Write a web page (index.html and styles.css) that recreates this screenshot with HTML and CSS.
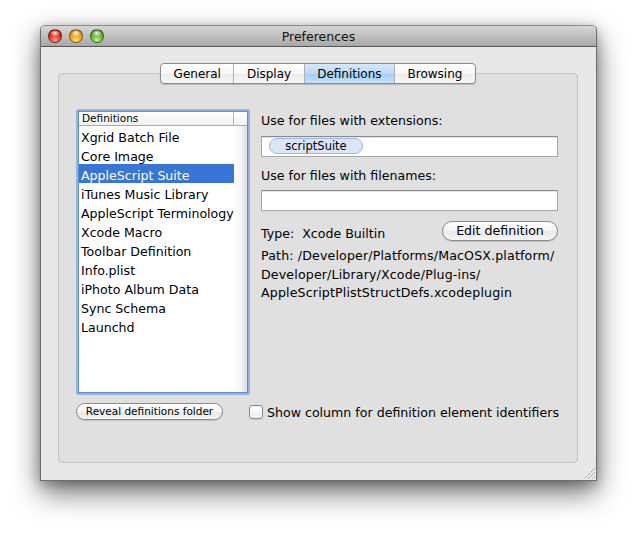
FILE: index.html
```html
<!DOCTYPE html>
<html>
<head>
<meta charset="utf-8">
<title>Preferences</title>
<link rel="stylesheet" href="styles.css">
</head>
<body>
<div class="window">
  <div class="titlebar">
    <div class="lights">
      <span class="light red"></span>
      <span class="light yellow"></span>
      <span class="light green"></span>
    </div>
    <div class="title">Preferences</div>
    <div></div>
  </div>
  <div class="content">
    <div class="tabbox">
      <div class="tabs">
        <span class="tab">General</span>
        <span class="tab">Display</span>
        <span class="tab active">Definitions</span>
        <span class="tab">Browsing</span>
      </div>
      <div class="pane">
        <div class="list">
          <div class="list-inner">
            <div class="list-head">
              <div class="head-cell">Definitions</div>
              <div class="head-filler"></div>
            </div>
            <div class="list-body">
              <div class="rows">
                <div class="row">Xgrid Batch File</div>
                <div class="row">Core Image</div>
                <div class="row selected">AppleScript Suite</div>
                <div class="row">iTunes Music Library</div>
                <div class="row">AppleScript Terminology</div>
                <div class="row">Xcode Macro</div>
                <div class="row">Toolbar Definition</div>
                <div class="row">Info.plist</div>
                <div class="row">iPhoto Album Data</div>
                <div class="row">Sync Schema</div>
                <div class="row">Launchd</div>
              </div>
              <div class="filler"></div>
            </div>
          </div>
        </div>
        <div class="details">
          <div class="label first">Use for files with extensions:</div>
          <div class="field field-ext"><span class="token">scriptSuite</span></div>
          <div class="label second">Use for files with filenames:</div>
          <div class="field field-names"></div>
          <div class="type-row">
            <div class="type"><span class="type-key">Type:</span>Xcode Builtin</div>
            <div class="push-btn">Edit definition</div>
          </div>
          <div class="path">Path: /Developer/Platforms/MacOSX.platform/<br>Developer/Library/Xcode/Plug-ins/<br>AppleScriptPlistStructDefs.xcodeplugin</div>
        </div>
      </div>
      <div class="bottom">
        <div class="small-btn">Reveal definitions folder</div>
        <label class="check"><span class="box"></span><span class="check-text">Show column for definition element identifiers</span></label>
      </div>
    </div>
  </div>
  <svg class="grip" width="11" height="11" viewBox="0 0 11 11"><path d="M10.5 0.5 L0.5 10.5 M10.5 4.5 L4.5 10.5 M10.5 8.5 L8.5 10.5" stroke="#7a7a7a" stroke-width="1" stroke-dasharray="1 1" fill="none"/></svg>
</div>
</body>
</html>
```

FILE: styles.css
```css
* { box-sizing: border-box; }
html, body { margin: 0; padding: 0; background: #fff; }
body {
  min-height: 535px;
  padding-top: 25px;
  font-family: "DejaVu Sans", "Liberation Sans", sans-serif;
  font-size: 12.6px;
  color: #000;
}
.window {
  position: relative;
  margin: 0 0 0 40px;
  width: 557px;
  height: 456px;
  display: flex;
  flex-direction: column;
  background: #e8e8e8;
  border: 1px solid #6e6e6e;
  border-top-color: #8c8c8c;
  border-radius: 5px 5px 0 0;
  box-shadow: 0 12px 28px rgba(0,0,0,0.55), 0 3px 12px rgba(0,0,0,0.25);
}
.titlebar {
  height: 21px;
  display: grid;
  grid-template-columns: 1fr auto 1fr;
  align-items: center;
  background: linear-gradient(#d6d6d6, #a8a8a8);
  border-bottom: 1px solid #565656;
  border-radius: 4px 4px 0 0;
}
.lights { display: flex; gap: 7px; padding-left: 7px; }
.light {
  width: 14px; height: 14px; border-radius: 50%;
  border: 1px solid rgba(0,0,0,0.4);
}
.red {
  background: radial-gradient(ellipse 55% 35% at 50% 26%, rgba(255,255,255,0.9), rgba(255,255,255,0) 80%),
              radial-gradient(circle at 50% 85%, #ff9a8c, #e0291d 55%, #8c0a05);
}
.yellow {
  background: radial-gradient(ellipse 55% 35% at 50% 26%, rgba(255,255,255,0.9), rgba(255,255,255,0) 80%),
              radial-gradient(circle at 50% 85%, #ffe07a, #f09a10 55%, #9c5a00);
}
.green {
  background: radial-gradient(ellipse 55% 35% at 50% 26%, rgba(255,255,255,0.9), rgba(255,255,255,0) 80%),
              radial-gradient(circle at 50% 85%, #c4f08e, #5cae2c 55%, #2c6a0e);
}
.title { font-size: 12.5px; color: #111; padding-top: 1px; }
.content {
  flex: 1;
  display: flex;
  flex-direction: column;
  padding: 26px 18px 17px 17px;
}
.tabbox {
  flex: 1;
  display: flex;
  flex-direction: column;
  background: #e0e0e0;
  border: 1px solid #c2c2c2;
  border-radius: 4px;
}
.tabs {
  align-self: center;
  margin-top: -11px;
  display: flex;
  height: 21px;
  font-size: 12px;
  border: 1px solid #8a8a8a;
  border-radius: 4px;
  overflow: hidden;
  background: linear-gradient(#ffffff, #f6f6f6 50%, #ececec 52%, #f7f7f7);
  box-shadow: 0 1px 1px rgba(0,0,0,0.18);
}
.tab {
  padding: 1px 12.5px 0;
  line-height: 19px;
  border-left: 1px solid #b0b0b0;
}
.tab:first-child { border-left: none; }
.tab.active {
  background: linear-gradient(#d6e9fc, #bcdaf8 50%, #a5cdf5 52%, #c4e2fc);
}
.pane {
  display: grid;
  grid-template-columns: 174px 1fr;
  column-gap: 11px;
  padding: 25px 19px 0 17px;
}
.list {
  height: 286px;
  border: 2px solid #92b4e4;
  border-radius: 2px;
}
.list-inner {
  height: 100%;
  border: 1px solid #5f8dd0;
  background: #fff;
  display: flex;
  flex-direction: column;
}
.list-head {
  display: flex;
  height: 14px;
  border-bottom: 1px solid #a8a8a8;
  background: linear-gradient(#ffffff, #f1f1f1);
  font-size: 10.5px;
  line-height: 13px;
}
.head-cell {
  width: 155px;
  padding-left: 3px;
  border-right: 1px solid #b3b3b3;
}
.head-filler { flex: 1; }
.list-body { flex: 1; display: flex; }
.rows { width: 155px; }
.row {
  height: 19px;
  line-height: 19px;
  padding: 2px 0 0 2px;
  white-space: nowrap;
}
.row.selected { background: #3875d7; color: #fff; }
.filler {
  flex: 1;
  background: linear-gradient(to right, #ffffff, #f6f6f6 50%, #dcdcdc);
}
.details { display: flex; flex-direction: column; }
.label { line-height: 19px; padding-top: 1px; }
.label.first { margin-top: 1px; }
.label.second { margin-top: 8px; }
.field {
  height: 21px;
  background: #fff;
  border: 1px solid #a5a5a5;
  border-top-color: #8a8a8a;
  box-shadow: inset 0 1px 0 #e4e4e4;
}
.field-ext { margin-top: 6px; padding: 1px 0 0 7px; }
.field-names { margin-top: 5px; }
.token {
  display: inline-block;
  width: 94px;
  height: 16px;
  line-height: 15px;
  text-align: center;
  font-size: 11.5px;
  background: #dce5f6;
  border: 1px solid #9fb6e4;
  border-radius: 8px;
}
.type-row {
  margin-top: 9px;
  display: flex;
  justify-content: space-between;
  align-items: center;
}
.type { padding-top: 6px; }
.type-key { margin-right: 8px; }
.push-btn {
  width: 116px;
  height: 20px;
  line-height: 18px;
  text-align: center;
  border: 1px solid #8a8a8a;
  border-radius: 10px;
  background: linear-gradient(#ffffff, #f5f5f5 50%, #e9e9e9 52%, #f6f6f6);
  box-shadow: 0 1px 1px rgba(0,0,0,0.15);
}
.path {
  margin-top: 6px;
  line-height: 18.5px;
  letter-spacing: 0.15px;
  white-space: nowrap;
}
.bottom {
  display: flex;
  align-items: center;
  padding: 8px 0 0 17px;
}
.small-btn {
  width: 147px;
  height: 17px;
  line-height: 15px;
  text-align: center;
  font-size: 10.5px;
  border: 1px solid #8a8a8a;
  border-radius: 9px;
  background: linear-gradient(#ffffff, #f5f5f5 50%, #e8e8e8 52%, #f5f5f5);
  box-shadow: 0 1px 1px rgba(0,0,0,0.12);
}
.check {
  margin-left: 26px;
  display: flex;
  align-items: center;
  gap: 4px;
}
.check-text { padding-top: 1px; }
.box {
  width: 14px;
  height: 14px;
  border: 1px solid #8a8a8a;
  border-radius: 3px;
  background: linear-gradient(#ffffff, #ececec);
  box-shadow: 0 1px 1px rgba(0,0,0,0.1);
}
.grip {
  position: absolute;
  right: 1px;
  bottom: 1px;
}
```
